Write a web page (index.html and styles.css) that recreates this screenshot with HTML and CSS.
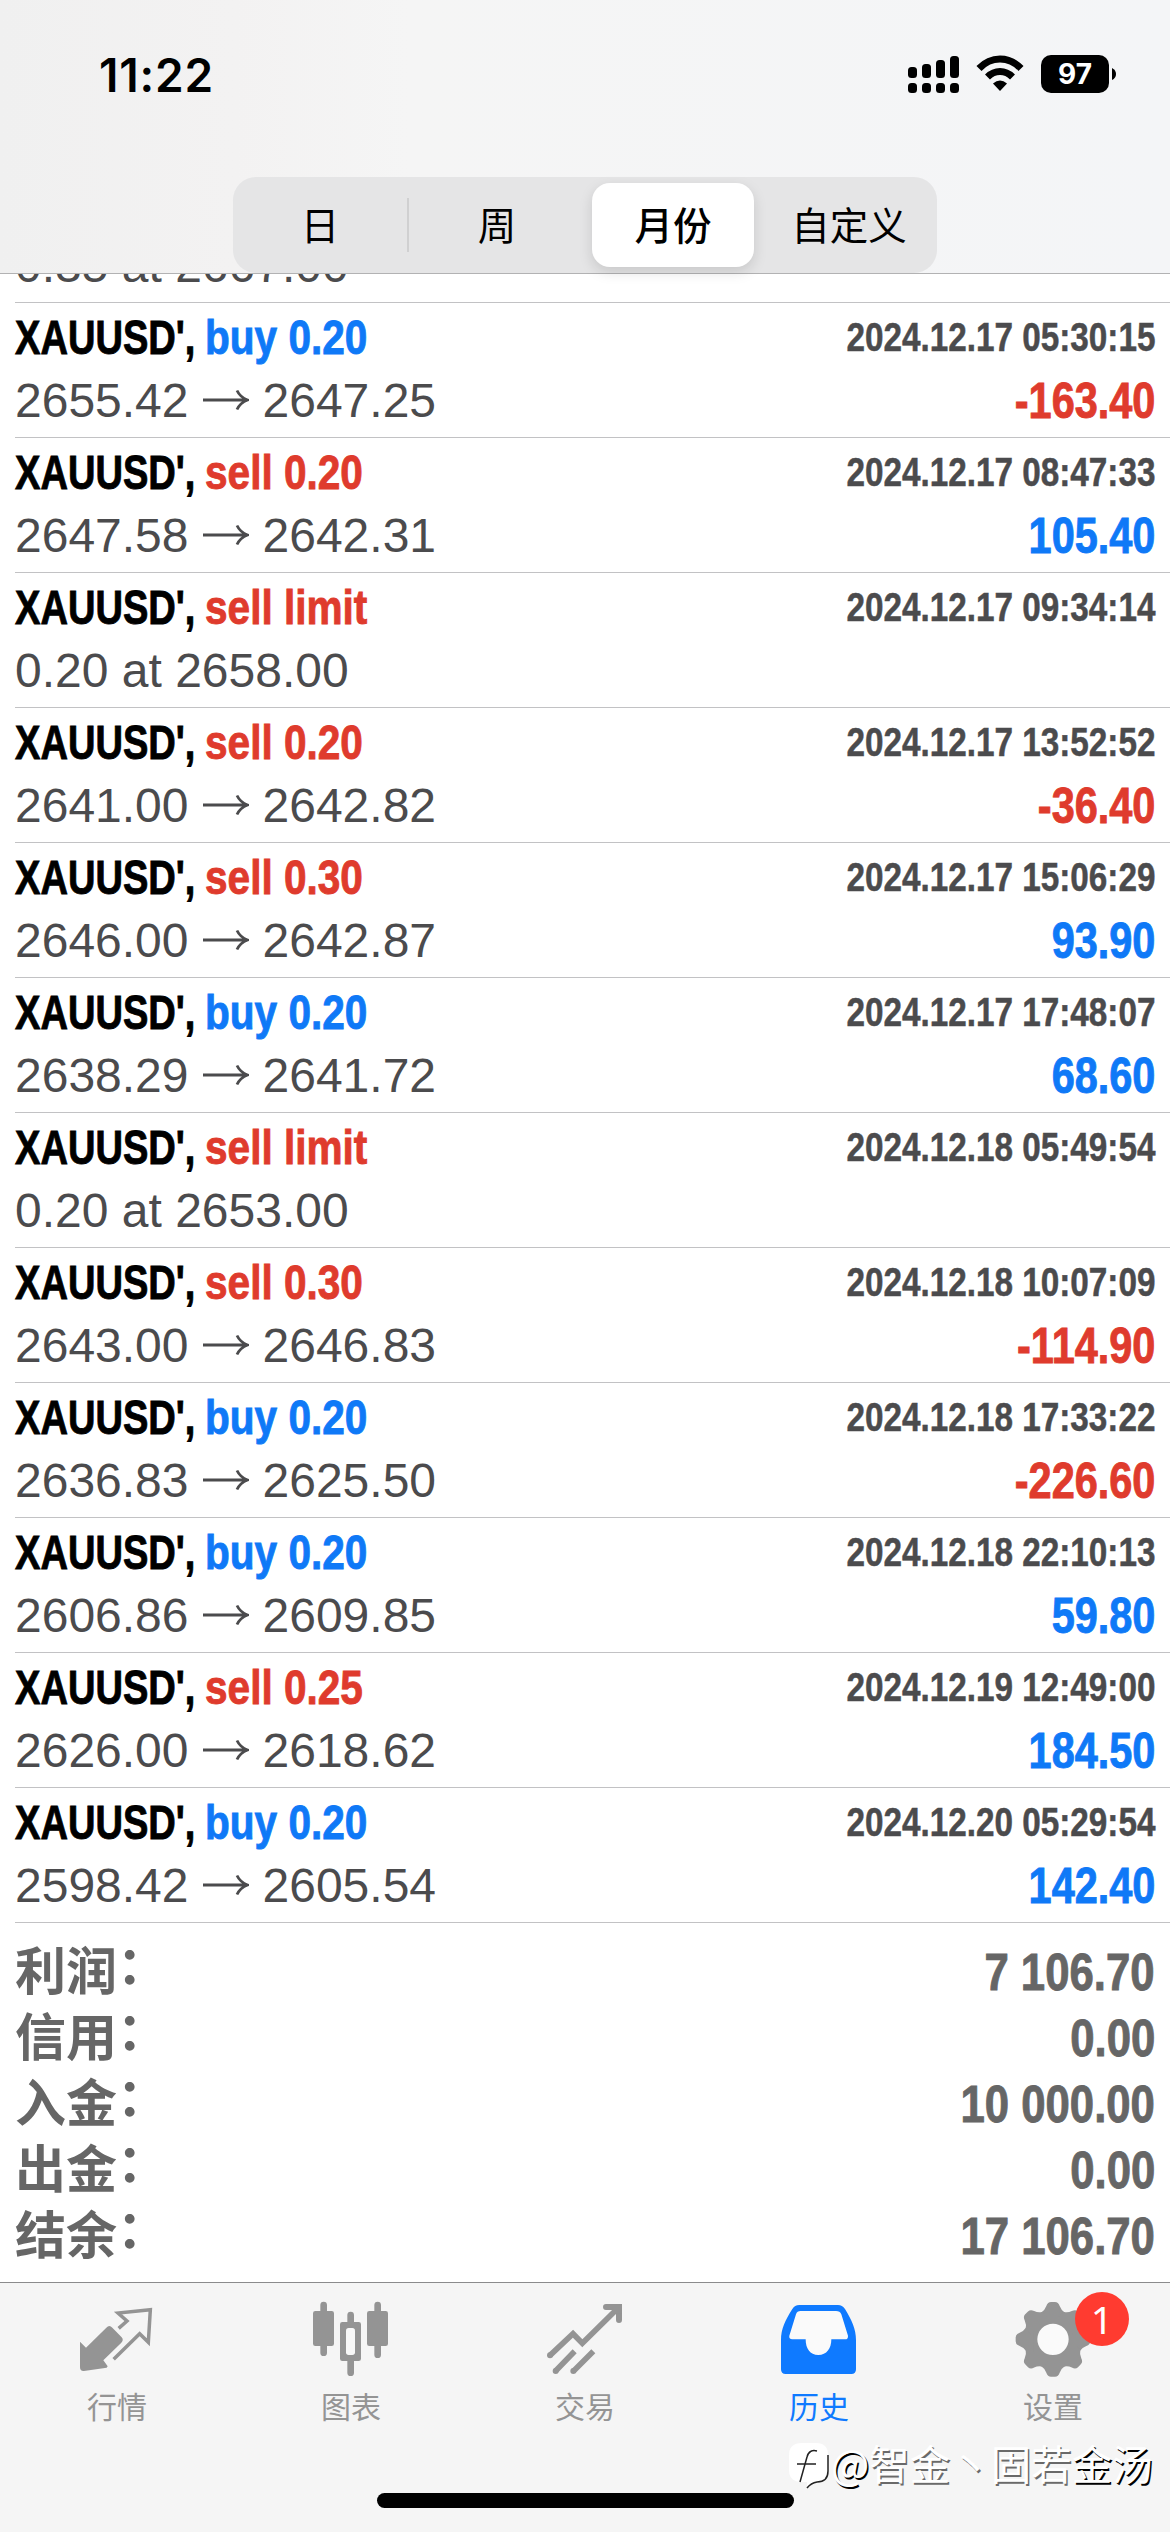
FILE: index.html
```
<!DOCTYPE html>
<html lang="zh-CN">
<head>
<meta charset="utf-8">
<title>历史</title>
<link rel="stylesheet" href="styles.css">
</head>
<body>
<svg class="defs" width="0" height="0"><symbol id="arrow" viewBox="0 0 46 22"><path d="M0 11H44M34 1.500Q37 8 44.500 11Q37 14 34 20.500" fill="none" stroke="currentColor" stroke-width="2.800"/></symbol></svg>
<header class="top">
  <div class="status">
    <div class="time">11:22</div>
    <div class="indicators">
      <svg class="signal" width="51" height="38" viewBox="0 0 51 38"><rect x="0" y="12" width="9" height="11" rx="3.500"/><rect x="14" y="9" width="9" height="14" rx="3.500"/><rect x="28" y="5" width="9" height="18" rx="3.500"/><rect x="42" y="1" width="9" height="22" rx="3.500"/><rect x="0" y="28" width="9" height="10" rx="3.500"/><rect x="14" y="28" width="9" height="10" rx="3.500"/><rect x="28" y="28" width="9" height="10" rx="3.500"/><rect x="42" y="28" width="9" height="10" rx="3.500"/></svg>
      <svg class="wifi" width="48" height="38" viewBox="0 0 48 38"><path d="M3 13.500Q12 4 24 4T45 13.500M11.500 22Q17 16.500 24 16.500T36.500 22" fill="none" stroke="#000" stroke-width="7"/><path d="M17 28.500Q24 22.500 31 28.500L24 36Z"/></svg>
      <div class="battery"><span>97</span></div>
      <svg width="4" height="12" viewBox="0 0 4 12"><path d="M0 0Q4 2 4 6T0 12Z"/></svg>
    </div>
  </div>
  <nav class="segments">
    <span class="seg divided">日</span><span class="seg">周</span><span class="seg"><b class="thumb">月份</b></span><span class="seg">自定义</span>
  </nav>
</header>
<main>
  <div class="clipped"><div class="price">0.35 at 2667.00</div></div>
  <div class="deal"><div class="head"><span class="sym">XAUUSD',</span><span class="type buy">buy 0.20</span></div><time>2024.12.17 05:30:15</time><div class="price">2655.42<svg><use href="#arrow"/></svg>2647.25</div><div class="profit sell">-163.40</div></div>
  <div class="deal"><div class="head"><span class="sym">XAUUSD',</span><span class="type sell">sell 0.20</span></div><time>2024.12.17 08:47:33</time><div class="price">2647.58<svg><use href="#arrow"/></svg>2642.31</div><div class="profit buy">105.40</div></div>
  <div class="deal"><div class="head"><span class="sym">XAUUSD',</span><span class="type sell">sell limit</span></div><time>2024.12.17 09:34:14</time><div class="price">0.20 at 2658.00</div></div>
  <div class="deal"><div class="head"><span class="sym">XAUUSD',</span><span class="type sell">sell 0.20</span></div><time>2024.12.17 13:52:52</time><div class="price">2641.00<svg><use href="#arrow"/></svg>2642.82</div><div class="profit sell">-36.40</div></div>
  <div class="deal"><div class="head"><span class="sym">XAUUSD',</span><span class="type sell">sell 0.30</span></div><time>2024.12.17 15:06:29</time><div class="price">2646.00<svg><use href="#arrow"/></svg>2642.87</div><div class="profit buy">93.90</div></div>
  <div class="deal"><div class="head"><span class="sym">XAUUSD',</span><span class="type buy">buy 0.20</span></div><time>2024.12.17 17:48:07</time><div class="price">2638.29<svg><use href="#arrow"/></svg>2641.72</div><div class="profit buy">68.60</div></div>
  <div class="deal"><div class="head"><span class="sym">XAUUSD',</span><span class="type sell">sell limit</span></div><time>2024.12.18 05:49:54</time><div class="price">0.20 at 2653.00</div></div>
  <div class="deal"><div class="head"><span class="sym">XAUUSD',</span><span class="type sell">sell 0.30</span></div><time>2024.12.18 10:07:09</time><div class="price">2643.00<svg><use href="#arrow"/></svg>2646.83</div><div class="profit sell">-114.90</div></div>
  <div class="deal"><div class="head"><span class="sym">XAUUSD',</span><span class="type buy">buy 0.20</span></div><time>2024.12.18 17:33:22</time><div class="price">2636.83<svg><use href="#arrow"/></svg>2625.50</div><div class="profit sell">-226.60</div></div>
  <div class="deal"><div class="head"><span class="sym">XAUUSD',</span><span class="type buy">buy 0.20</span></div><time>2024.12.18 22:10:13</time><div class="price">2606.86<svg><use href="#arrow"/></svg>2609.85</div><div class="profit buy">59.80</div></div>
  <div class="deal"><div class="head"><span class="sym">XAUUSD',</span><span class="type sell">sell 0.25</span></div><time>2024.12.19 12:49:00</time><div class="price">2626.00<svg><use href="#arrow"/></svg>2618.62</div><div class="profit buy">184.50</div></div>
  <div class="deal"><div class="head"><span class="sym">XAUUSD',</span><span class="type buy">buy 0.20</span></div><time>2024.12.20 05:29:54</time><div class="price">2598.42<svg><use href="#arrow"/></svg>2605.54</div><div class="profit buy">142.40</div></div>
  <section class="summary">
    <div class="total"><span>利润<i>：</i></span><b>7 106.70</b></div>
    <div class="total"><span>信用<i>：</i></span><b>0.00</b></div>
    <div class="total"><span>入金<i>：</i></span><b>10 000.00</b></div>
    <div class="total"><span>出金<i>：</i></span><b>0.00</b></div>
    <div class="total"><span>结余<i>：</i></span><b>17 106.70</b></div>
  </section>
</main>
<footer class="tabbar">
  <div class="tabs">
    <div class="tab"><svg class="icon" viewBox="15 18 252 252"><path d="M30 155L48 173L109 113Q118 103 127 113L155 142Q162 150 154 158L100 211L113 229L110 233L42 243Q30 244 30 232Z"/><path d="M146 115L171 93L144 69L241 59L235 157L209 131L131 208" fill="none" stroke="currentColor" stroke-width="10.500"/></svg>行情</div>
    <div class="tab"><svg class="icon" viewBox="717 18 252 252"><path d="M761 45V188M842 75V105M842 205V248M923 45V194" stroke="currentColor" stroke-width="20" stroke-linecap="round"/><rect x="729" y="63" width="63" height="105" rx="7"/><rect x="891" y="63" width="63" height="105" rx="7"/><rect x="810" y="96" width="63" height="117" rx="7"/><rect x="828" y="114" width="27" height="81" rx="8" fill="#f8f8f8"/></svg>图表</div>
    <div class="tab"><svg class="icon" viewBox="39 18 252 252"><path d="M60 196L129 131L157 160L265 53M76 244L134 184M130 244L190 184" fill="none" stroke="currentColor" stroke-width="17"/><circle cx="60" cy="196" r="9"/><circle cx="77" cy="243" r="9"/><circle cx="130" cy="243" r="9"/><path d="M228 51H267V90" fill="none" stroke="currentColor" stroke-width="18" stroke-linecap="round" stroke-linejoin="bevel"/><path d="M248 42H276V70H248Z"/></svg>交易</div>
    <div class="tab active"><svg class="icon" viewBox="741 18 252 252"><path d="M808 45H924Q937 45 945 57C965 90 978 116 978 151V238Q978 252 964 252H767Q753 252 753 238V151C753 116 766 90 787 57Q794 45 808 45Z"/><path d="M812 63H918Q930 63 934 73L954 137Q955 148 945 148H904C904 176 890 195 865 195S827 176 827 148H787Q776 147 778 137L798 73Q801 63 812 63Z" fill="#fafafa"/></svg>历史</div>
    <div class="tab"><svg class="icon" viewBox="693 18 252 252"><defs><path id="tooth" d="M783 68Q795 60 799 48Q803 36 813 36H825Q835 36 839 48Q843 60 855 68V90H783Z"/></defs><circle cx="819" cy="148" r="67" fill="#fafafa" stroke="currentColor" stroke-width="40"/><use href="#tooth"/><use href="#tooth" transform="rotate(45 819 148)"/><use href="#tooth" transform="rotate(90 819 148)"/><use href="#tooth" transform="rotate(135 819 148)"/><use href="#tooth" transform="rotate(180 819 148)"/><use href="#tooth" transform="rotate(225 819 148)"/><use href="#tooth" transform="rotate(270 819 148)"/><use href="#tooth" transform="rotate(315 819 148)"/></svg>设置<span class="badge">1</span></div>
  </div>
  <div class="home"></div>
  <div class="credit"><svg width="44" height="50" viewBox="0 0 44 50"><path d="M15 1H29Q41 1 41 13V29Q41 40 30 40Q24 41 20 46L20 40H15Q2 40 2 28V13Q2 1 15 1Z" fill="#fff"/><path d="M41 13V29Q41 40 30 40Q24 41 20 46M30 9Q22 7 20 15L13 40M10 22H29" fill="none" stroke="#222" stroke-width="1.500"/></svg><span><em>@</em>智金丶固若<em>金汤</em></span></div>
</footer>
</body>
</html>
```
FILE: styles.css
```
* { box-sizing: border-box; }
body {
  margin: 0;
  width: 1170px;
  height: 2532px;
  display: flex;
  flex-direction: column;
  background: #fff;
  overflow: hidden;
  font-family: "Liberation Sans", "Noto Sans CJK SC", sans-serif;
}
.defs { position: absolute; }

.top {
  height: 274px;
  flex: none;
  border-bottom: 1px solid #b2b2b3;
  background: linear-gradient(90deg, #f0f0f0, #f3f2f2 20%, #f5f5f5 35%, #f4f5f7);
  display: flex;
  flex-direction: column;
  align-items: center;
}
.status {
  width: 100%;
  height: 177px;
  flex: none;
  padding: 0 54px 0 99px;
  display: flex;
  justify-content: space-between;
}
.time {
  padding-top: 47px;
  font: 600 46px/56px Inter, sans-serif;
  letter-spacing: .8px;
}
.indicators { display: flex; height: 148px; align-items: center; }
.wifi { margin: 0 17px; }
.battery {
  width: 68px;
  height: 38px;
  margin-right: 3px;
  border-radius: 10px;
  background: #000;
  color: #fff;
  font: 700 28px/38px Inter, sans-serif;
  text-align: center;
}
.segments {
  width: 704px;
  height: 96px;
  display: grid;
  grid-template-columns: repeat(4, 1fr);
  align-items: center;
  border-radius: 23px;
  background: #e5e5e6;
  font: 38.500px/50px "Noto Sans CJK SC", sans-serif;
}
.seg { display: flex; justify-content: center; align-items: center; height: 54px; padding-bottom: 4px; }
.divided { border-right: 2px solid #d0d0d1; }
.thumb {
  width: 162px;
  height: 84px;
  margin-bottom: -4px;
  border-radius: 18px;
  background: #fff;
  box-shadow: 0 5px 14px rgba(0, 0, 0, .13);
  font-weight: 500;
  line-height: 80px;
  text-align: center;
}

main { flex: 1; }
.clipped {
  height: 29px;
  margin-left: 15px;
  border-bottom: 1px solid #c2c2c4;
  display: flex;
  flex-direction: column;
  justify-content: flex-end;
  overflow: hidden;
  line-height: 63px;
  color: #4b4b4d;
}
.clipped .price { padding-bottom: 5px; }
.deal {
  height: 135px;
  margin-left: 15px;
  padding: 3px 15px 0 0;
  border-bottom: 1px solid #c2c2c4;
  display: grid;
  grid-template: 63px 63px / 1fr auto;
  line-height: 63px;
  color: #4b4b4d;
}
.head {
  display: flex;
  font-size: 49px;
  font-weight: 700;
  white-space: nowrap;
  -webkit-text-stroke: .9px currentColor;
}
.sym { width: 190px; color: #000; transform: scaleX(.777); transform-origin: left; }
.type { transform: scaleX(.828); transform-origin: left; }
.buy { color: #0f79f7; }
.sell { color: #df3b2d; }
time {
  font-size: 40px;
  font-weight: 700;
  text-align: right;
  transform: scaleX(.832);
  transform-origin: right;
  -webkit-text-stroke: .5px currentColor;
}
.price { font-size: 48px; }
.price svg { width: 46px; height: 22px; margin: 0 14px 6px 14px; }
.profit {
  font-size: 49.500px;
  font-weight: 700;
  text-align: right;
  transform: scaleX(.838);
  transform-origin: right;
  -webkit-text-stroke: .9px currentColor;
}

.summary { padding: 12px 15px 0; color: #666; }
.total {
  height: 66px;
  display: flex;
  justify-content: space-between;
  align-items: baseline;
  line-height: 66px;
}
.total span { font-family: "Noto Sans CJK SC", sans-serif; font-size: 51px; font-weight: 700; }
.total i { font-style: normal; line-height: 0; vertical-align: 6px; }
.total b { font-size: 51px; transform: scaleX(.857); transform-origin: right; -webkit-text-stroke: .9px currentColor; }

.tabbar {
  position: relative;
  height: 250px;
  flex: none;
  border-top: 1px solid #8b8b8c;
  background: #f5f5f5;
}
.tabs { display: grid; grid-template-columns: repeat(5, 1fr); height: 210px; }
.tab {
  position: relative;
  padding-top: 13px;
  display: flex;
  flex-direction: column;
  align-items: center;
  color: #949494;
  font: 30px/51px "Noto Sans CJK SC", sans-serif;
}
.active { color: #0f7aff; }
.icon { width: 84px; height: 84px; fill: currentColor; }
.badge {
  position: absolute;
  left: 139px;
  top: 9px;
  width: 54px;
  height: 54px;
  border-radius: 50%;
  background: #ff3b30;
  color: #fff;
  font: 39px/54px "Noto Sans", sans-serif;
  text-align: center;
}
.home { width: 417px; height: 15px; margin: 0 auto; border-radius: 8px; background: #000; }
.credit {
  position: absolute;
  left: 787px;
  top: 150px;
  display: flex;
  align-items: center;
  color: #fff;
  font: 40.500px/60px "Noto Sans CJK SC", sans-serif;
  text-shadow: 1.500px 1.500px 0 #6a6a6a;
  white-space: nowrap;
}
.credit svg { margin-top: 8px; }
.credit em { font-style: normal; text-shadow: 1.500px 1.500px 0 #000; }
```
